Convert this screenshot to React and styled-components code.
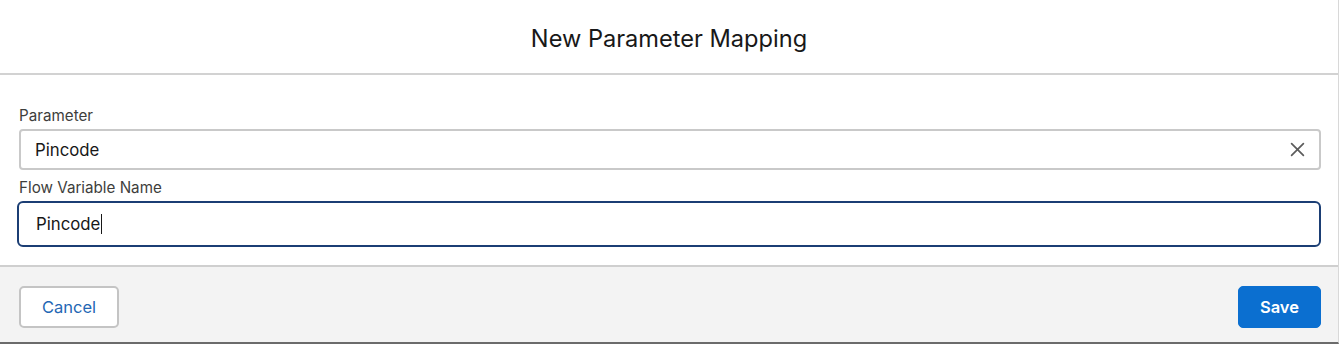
import React from 'react';
import styled, { createGlobalStyle } from 'styled-components';

const GlobalStyle = createGlobalStyle`
  html, body {
    margin: 0;
    padding: 0;
    background: #ffffff;
  }
  body {
    font-family: Inter, 'Noto Sans', sans-serif;
    color: #181818;
  }
`;

const Modal = styled.div`
  width: 1339px;
  height: 344px;
  box-sizing: border-box;
  display: flex;
  flex-direction: column;
  border-right: 1px solid #d8d8d8;
  border-bottom: 2px solid #6b6b6b;
  overflow: hidden;
`;

const Header = styled.div`
  height: 73px;
  flex: 0 0 auto;
  display: flex;
  align-items: center;
  justify-content: center;
  border-bottom: 2px solid #d2d2d2;
  background: #fff;
`;

const Title = styled.h2`
  margin: 0;
  padding-top: 3px;
  font-size: 23.6px;
  font-weight: 400;
  color: #181818;
`;

const Body = styled.div`
  flex: 1 1 auto;
  padding: 31px 17px 0 17px;
  display: flex;
  flex-direction: column;
  background: #fff;
  border-bottom: 2px solid #cfcfcf;
`;

const Field = styled.div`
  display: flex;
  flex-direction: column;
  margin-bottom: ${(p) => p.gap || 0}px;
`;

const Label = styled.label`
  font-size: 15.2px;
  color: #3e3e3c;
  line-height: 20px;
  margin-bottom: 3px;
  padding-left: 2px;
`;

const InputBox = styled.div`
  height: ${(p) => (p.focused ? 46 : 41)}px;
  box-sizing: border-box;
  margin-left: ${(p) => (p.focused ? 0 : 2)}px;
  border: 2px solid ${(p) => (p.focused ? '#1b3e74' : '#c9c9c9')};
  border-radius: ${(p) => (p.focused ? 6 : 4)}px;
  background: #fff;
  display: flex;
  align-items: center;
  padding: 0 14px 0 ${(p) => (p.focused ? 17 : 14)}px;
  font-size: 16.8px;
  color: #181818;
`;

const Caret = styled.span`
  display: inline-block;
  width: 1px;
  height: 20px;
  background: #181818;
  margin-left: 1px;
`;

const ClearButton = styled.span`
  margin-left: auto;
  display: flex;
  align-items: center;
  color: #5c5c5c;
`;

const Footer = styled.div`
  height: 75px;
  flex: 0 0 auto;
  background: #f3f3f3;
  display: flex;
  align-items: center;
  justify-content: space-between;
  padding: 4px 17px 0 19px;
  box-sizing: border-box;
`;

const Button = styled.button`
  height: 42px;
  box-sizing: border-box;
  border-radius: 5px;
  font-family: Inter, 'Noto Sans', sans-serif;
  font-size: 16.5px;
  padding: 0 21px;
  border: ${(p) => (p.primary ? '1px solid #0b6fd0' : '2px solid #c4c4c4')};
  background: ${(p) => (p.primary ? '#0b6fd0' : '#ffffff')};
  color: ${(p) => (p.primary ? '#ffffff' : '#2467b4')};
  font-weight: ${(p) => (p.primary ? 600 : 400)};
`;

const App = () => (
  <>
    <GlobalStyle />
    <Modal>
      <Header>
        <Title>New Parameter Mapping</Title>
      </Header>
      <Body>
        <Field gap={8}>
          <Label>Parameter</Label>
          <InputBox>
            Pincode
            <ClearButton>
              <svg width="15" height="15" viewBox="0 0 14 14">
                <path d="M1.5 1.5 L12.5 12.5 M12.5 1.5 L1.5 12.5" stroke="currentColor" strokeWidth="1.6" strokeLinecap="round" />
              </svg>
            </ClearButton>
          </InputBox>
        </Field>
        <Field>
          <Label>Flow Variable Name</Label>
          <InputBox focused>
            Pincode
            <Caret />
          </InputBox>
        </Field>
      </Body>
      <Footer>
        <Button>Cancel</Button>
        <Button primary>Save</Button>
      </Footer>
    </Modal>
  </>
);

export default App;
